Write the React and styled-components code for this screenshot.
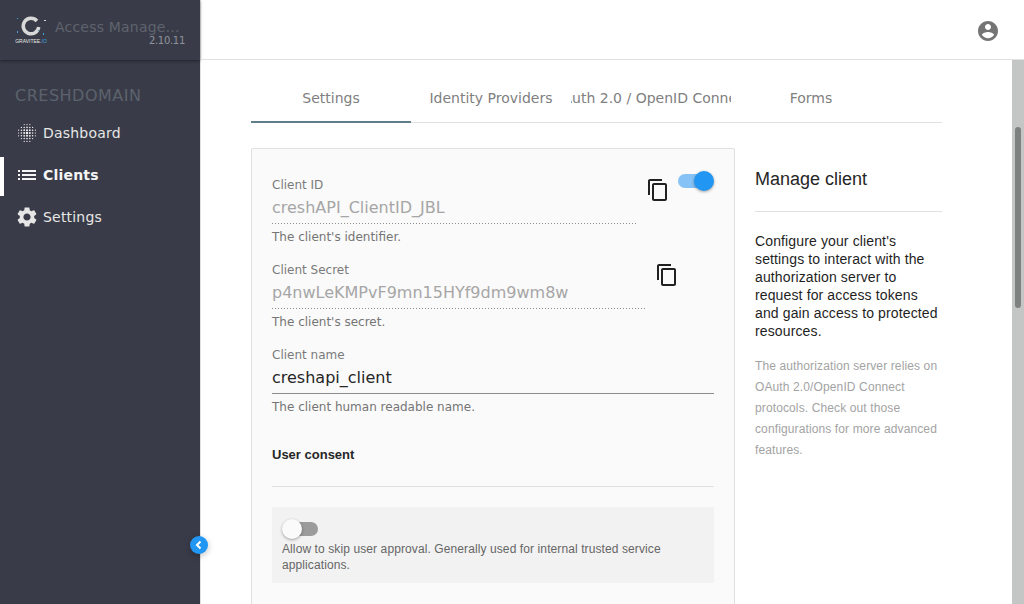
import React from "react";
import styled, { createGlobalStyle } from "styled-components";

const GlobalStyle = createGlobalStyle`
  html, body {
    margin: 0;
    height: 100%;
    overflow: hidden;
    background: #fff;
    font-family: "DejaVu Sans", sans-serif;
  }
`;

const Page = styled.div`
  display: flex;
  width: 1024px;
  height: 604px;
  overflow: hidden;
  position: relative;
`;

const Sidebar = styled.aside`
  width: 200px;
  flex: none;
  background: #393c48;
  border-right: 1px solid #e0e0e0;
  color: #eee;
`;

const Brand = styled.div`
  height: 60px;
  box-sizing: border-box;
  display: flex;
  align-items: center;
  padding: 0 15px;
  gap: 8px;
  box-shadow: 0 1px 3px rgba(0, 0, 0, 0.45);
`;

const Logo = styled.div`
  width: 32px;
  flex: none;
  display: flex;
  flex-direction: column;
  align-items: center;
  color: #e4e4e4;
  font-size: 5px;
  line-height: 6px;
  white-space: nowrap;
  font-family: "Liberation Sans", sans-serif;

  span {
    color: #3fa4e0;
  }
`;

const BrandText = styled.div`
  flex: 1;
  min-width: 0;
  margin-top: 4px;
`;

const BrandName = styled.div`
  font-size: 14px;
  line-height: 18px;
  letter-spacing: 0.2px;
  padding-right: 4px;
  color: #5f636e;
  white-space: nowrap;
  overflow: hidden;
  text-overflow: ellipsis;
`;

const Version = styled.div`
  font-size: 10px;
  line-height: 10px;
  letter-spacing: -0.3px;
  color: #8f929a;
  text-align: right;
`;

const DomainName = styled.div`
  margin: 26px 0 0 15px;
  font-size: 16px;
  line-height: 20px;
  letter-spacing: 0.5px;
  color: #5c626d;
`;

const Nav = styled.nav`
  margin-top: 6px;
`;

const NavItem = styled.a`
  position: relative;
  height: 42px;
  display: flex;
  align-items: center;
  gap: 4px;
  padding-left: 15px;
  font-size: 14px;
  letter-spacing: 0.2px;
  font-weight: ${(p) => (p.$active ? 700 : 400)};
  color: ${(p) => (p.$active ? "#f5f5f5" : "#e6e6e6")};

  svg {
    flex: none;
  }

  ${(p) =>
    p.$active &&
    `
    &::before {
      content: "";
      position: absolute;
      left: 0;
      bottom: 0;
      width: 4px;
      height: 39px;
      background: #fff;
    }
  `}
`;

const CollapseButton = styled.button`
  position: absolute;
  left: 190px;
  top: 536px;
  width: 18px;
  height: 18px;
  padding: 0;
  border: 0;
  border-radius: 50%;
  background: #2196f3;
  box-shadow: 0 2px 6px rgba(0, 0, 0, 0.25);
  display: flex;
  align-items: center;
  justify-content: center;
`;

const Main = styled.main`
  flex: 1;
  min-width: 0;
  display: flex;
  flex-direction: column;
`;

const TopBar = styled.header`
  height: 60px;
  flex: none;
  box-sizing: border-box;
  border-bottom: 1px solid #e0e0e0;
  display: flex;
  align-items: center;
  justify-content: flex-end;
  padding: 2px 24px 0 0;
`;

const Body = styled.div`
  flex: 1;
  min-height: 0;
  display: flex;
`;

const Content = styled.div`
  flex: 1;
  min-width: 0;
  overflow: hidden;
  padding: 12px 70px 0 50px;
`;

const ScrollTrack = styled.div`
  width: 12px;
  flex: none;
  background: #c4c6c5;
  display: flex;
  justify-content: center;
`;

const ScrollThumb = styled.div`
  width: 6px;
  height: 181px;
  margin-top: 67px;
  border-radius: 3px;
  background: #7d8180;
`;

const Tabs = styled.div`
  display: flex;
  height: 51px;
  box-sizing: border-box;
  border-bottom: 1px solid #e0e0e0;
`;

const Tab = styled.div`
  width: 160px;
  flex: none;
  box-sizing: border-box;
  height: 51px;
  display: flex;
  justify-content: center;
  padding-top: 17px;
  overflow: hidden;
  white-space: nowrap;
  font-size: 14px;
  line-height: 18px;
  color: #808080;
  border-bottom: ${(p) => (p.$active ? "2px solid #607d8b" : "0")};
`;

const Columns = styled.div`
  display: flex;
  gap: 20px;
  margin-top: 25px;
`;

const Card = styled.section`
  width: 484px;
  flex: none;
  box-sizing: border-box;
  border: 1px solid #e0e0e0;
  border-radius: 2px;
  background: #fafafa;
  padding: 28px 20px 40px;
`;

const FieldRow = styled.div`
  display: flex;
  align-items: flex-start;
  margin-bottom: 17px;
`;

const Field = styled.div`
  width: ${(p) => (p.$width ? `${p.$width}px` : "100%")};
  flex: none;
`;

const Label = styled.div`
  font-size: 12px;
  line-height: 16px;
  color: #7a7a7a;
`;

const Value = styled.div`
  height: 27px;
  font-size: 16px;
  line-height: 24px;
  margin-top: 3px;
  color: #262626;
  border-bottom: 1px solid #8c8c8c;
`;

const ReadOnlyValue = styled(Value)`
  color: #a6a6a6;
  border-bottom: 0;
  height: 28px;
  background: linear-gradient(to right, #8c8c8c 33%, transparent 0) left bottom / 3px 1px repeat-x;
`;

const Hint = styled.div`
  font-size: 12px;
  line-height: 16px;
  margin-top: 5px;
  color: #757575;
`;

const CopyButton = styled.div`
  margin: 1px 0 0 ${(p) => p.$left}px;
  width: 24px;
  height: 24px;
  flex: none;
  color: #212121;
`;

const Switch = styled.div`
  position: relative;
  width: 36px;
  height: 14px;
  flex: none;
`;

const SwitchTrack = styled.div`
  width: 26px;
  height: 14px;
  margin-left: ${(p) => (p.$on ? "0" : "10px")};
  border-radius: 7px;
  background: ${(p) => (p.$on ? "#86c2f6" : "#9b9b9b")};
`;

const SwitchKnob = styled.div`
  position: absolute;
  top: -3px;
  ${(p) => (p.$on ? "right: 0;" : "left: 0;")}
  width: 20px;
  height: 20px;
  border-radius: 50%;
  background: ${(p) => (p.$on ? "#2196f3" : "#fafafa")};
  box-shadow: 0 1px 3px rgba(0, 0, 0, 0.35);
`;

const TopSwitch = styled.div`
  margin: -3px 0 0 8px;
`;

const SectionTitle = styled.h4`
  margin: 32px 0 0;
  padding-bottom: 23px;
  border-bottom: 1px solid #e0e0e0;
  font-family: "Liberation Sans", sans-serif;
  font-size: 13px;
  line-height: 16px;
  font-weight: 700;
  color: #262626;
`;

const OptionBox = styled.div`
  margin-top: 20px;
  padding: 15px 10px 10px;
  background: #f2f2f2;
`;

const OptionText = styled.div`
  margin-top: 5px;
  font-family: "Liberation Sans", sans-serif;
  font-size: 12px;
  line-height: 16px;
  letter-spacing: 0.1px;
  color: #666;
`;

const Aside = styled.div`
  flex: 1;
  font-family: "Liberation Sans", sans-serif;
`;

const AsideTitle = styled.h3`
  margin: 0;
  padding: 20px 0 21px;
  border-bottom: 1px solid #e0e0e0;
  font-size: 18px;
  line-height: 22px;
  font-weight: 400;
  color: #262626;
`;

const AsideLead = styled.p`
  margin: 20px 0 0;
  font-size: 14px;
  line-height: 18px;
  letter-spacing: 0.13px;
  color: #1f1f1f;
`;

const AsideNote = styled.p`
  margin: 16px 0 0;
  font-size: 12px;
  line-height: 21px;
  letter-spacing: 0.12px;
  color: #a3a3a3;
`;

const Icon = ({ d, size = 24, color = "currentColor" }) => (
  <svg width={size} height={size} viewBox="0 0 24 24" fill={color}>
    <path d={d} />
  </svg>
);

const COPY =
  "M16 1H4c-1.1 0-2 .9-2 2v14h2V3h12V1zm3 4H8c-1.1 0-2 .9-2 2v14c0 1.1.9 2 2 2h11c1.1 0 2-.9 2-2V7c0-1.1-.9-2-2-2zm0 16H8V7h11v14z";
const ACCOUNT =
  "M12 2C6.48 2 2 6.48 2 12s4.48 10 10 10 10-4.48 10-10S17.52 2 12 2zm0 3c1.66 0 3 1.34 3 3s-1.34 3-3 3-3-1.34-3-3 1.34-3 3-3zm0 14.2c-2.5 0-4.71-1.28-6-3.22.03-1.99 4-3.08 6-3.08 1.99 0 5.97 1.09 6 3.08-1.29 1.94-3.5 3.22-6 3.22z";
const LIST =
  "M3 13h2v-2H3v2zm0 4h2v-2H3v2zm0-8h2V7H3v2zm4 4h14v-2H7v2zm0 4h14v-2H7v2zM7 7v2h14V7H7z";
const GEAR =
  "M19.14 12.94c.04-.3.06-.61.06-.94 0-.32-.02-.64-.07-.94l2.03-1.58c.18-.14.23-.41.12-.61l-1.92-3.32c-.12-.22-.37-.29-.59-.22l-2.39.96c-.5-.38-1.03-.7-1.62-.94l-.36-2.54c-.04-.24-.24-.41-.48-.41h-3.84c-.24 0-.43.17-.47.41l-.36 2.54c-.59.24-1.13.57-1.62.94l-2.39-.96c-.22-.08-.47 0-.59.22L2.74 8.87c-.12.21-.08.47.12.61l2.03 1.58c-.05.3-.09.63-.09.94s.02.64.07.94l-2.03 1.58c-.18.14-.23.41-.12.61l1.92 3.32c.12.22.37.29.59.22l2.39-.96c.5.38 1.03.7 1.62.94l.36 2.54c.05.24.24.41.48.41h3.84c.24 0 .44-.17.47-.41l.36-2.54c.59-.24 1.13-.56 1.62-.94l2.39.96c.22.08.47 0 .59-.22l1.92-3.32c.12-.22.07-.47-.12-.61l-2.01-1.58zM12 15.6c-1.98 0-3.6-1.62-3.6-3.6s1.62-3.6 3.6-3.6 3.6 1.62 3.6 3.6-1.62 3.6-3.6 3.6z";

const DOT_OFFSETS = [-8.4, -5.6, -2.8, 0, 2.8, 5.6, 8.4];

const DotsIcon = () => (
  <svg width="24" height="24" viewBox="-12 -12 24 24" fill="#f2f2f2">
    {DOT_OFFSETS.flatMap((x) =>
      DOT_OFFSETS.map((y) => {
        const dist = Math.hypot(x, y);
        if (dist > 10) return null;
        return <circle key={`${x}-${y}`} cx={x} cy={y} r={Math.max(0.55, 1.2 - dist * 0.07)} />;
      })
    )}
  </svg>
);

const LogoMark = () => (
  <svg width="32" height="22" viewBox="0 0 32 22">
    <path d="M21.9 5A7.75 7.75 0 1 0 23.7 11" fill="none" stroke="#d8d8d8" strokeWidth="3.5" />
    <rect x="2" y="2" width="1" height="1" fill="#3fa4e0" />
    <rect x="2" y="15" width="1" height="2" fill="#3fa4e0" />
    <rect x="29" y="4" width="2" height="1" fill="#d8d8d8" />
    <rect x="28" y="17" width="1" height="2" fill="#3fa4e0" />
    <rect x="23" y="14" width="1" height="1" fill="#3fa4e0" />
  </svg>
);

const App = () => (
  <Page>
    <GlobalStyle />
    <Sidebar>
      <Brand>
        <Logo>
          <LogoMark />
          <div>
            GRAVITEE.<span>IO</span>
          </div>
        </Logo>
        <BrandText>
          <BrandName>Access Management</BrandName>
          <Version>2.10.11</Version>
        </BrandText>
      </Brand>
      <DomainName>CRESHDOMAIN</DomainName>
      <Nav>
        <NavItem>
          <DotsIcon />
          Dashboard
        </NavItem>
        <NavItem $active>
          <Icon d={LIST} />
          Clients
        </NavItem>
        <NavItem>
          <Icon d={GEAR} />
          Settings
        </NavItem>
      </Nav>
    </Sidebar>
    <CollapseButton aria-label="Collapse menu">
      <svg width="10" height="10" viewBox="0 0 10 10">
        <path d="M6.5 1.5 3 5l3.5 3.5" fill="none" stroke="#fff" strokeWidth="2" />
      </svg>
    </CollapseButton>
    <Main>
      <TopBar>
        <Icon d={ACCOUNT} color="#757575" />
      </TopBar>
      <Body>
        <Content>
          <Tabs>
            <Tab $active>Settings</Tab>
            <Tab>Identity Providers</Tab>
            <Tab>OAuth 2.0 / OpenID Connect</Tab>
            <Tab>Forms</Tab>
          </Tabs>
          <Columns>
            <Card>
              <FieldRow>
                <Field $width={366}>
                  <Label>Client ID</Label>
                  <ReadOnlyValue>creshAPI_ClientID_JBL</ReadOnlyValue>
                  <Hint>The client's identifier.</Hint>
                </Field>
                <CopyButton $left={8}>
                  <Icon d={COPY} />
                </CopyButton>
                <TopSwitch>
                  <Switch>
                    <SwitchTrack $on />
                    <SwitchKnob $on />
                  </Switch>
                </TopSwitch>
              </FieldRow>
              <FieldRow>
                <Field $width={373}>
                  <Label>Client Secret</Label>
                  <ReadOnlyValue>p4nwLeKMPvF9mn15HYf9dm9wm8w</ReadOnlyValue>
                  <Hint>The client's secret.</Hint>
                </Field>
                <CopyButton $left={10}>
                  <Icon d={COPY} />
                </CopyButton>
              </FieldRow>
              <Field>
                <Label>Client name</Label>
                <Value>creshapi_client</Value>
                <Hint>The client human readable name.</Hint>
              </Field>
              <SectionTitle>User consent</SectionTitle>
              <OptionBox>
                <Switch>
                  <SwitchTrack />
                  <SwitchKnob />
                </Switch>
                <OptionText>
                  Allow to skip user approval. Generally used for internal trusted service applications.
                </OptionText>
              </OptionBox>
            </Card>
            <Aside>
              <AsideTitle>Manage client</AsideTitle>
              <AsideLead>
                Configure your client's settings to interact with the authorization server to request for access
                tokens and gain access to protected resources.
              </AsideLead>
              <AsideNote>
                The authorization server relies on OAuth 2.0/OpenID Connect protocols. Check out those configurations
                for more advanced features.
              </AsideNote>
            </Aside>
          </Columns>
        </Content>
        <ScrollTrack>
          <ScrollThumb />
        </ScrollTrack>
      </Body>
    </Main>
  </Page>
);

export default App;
